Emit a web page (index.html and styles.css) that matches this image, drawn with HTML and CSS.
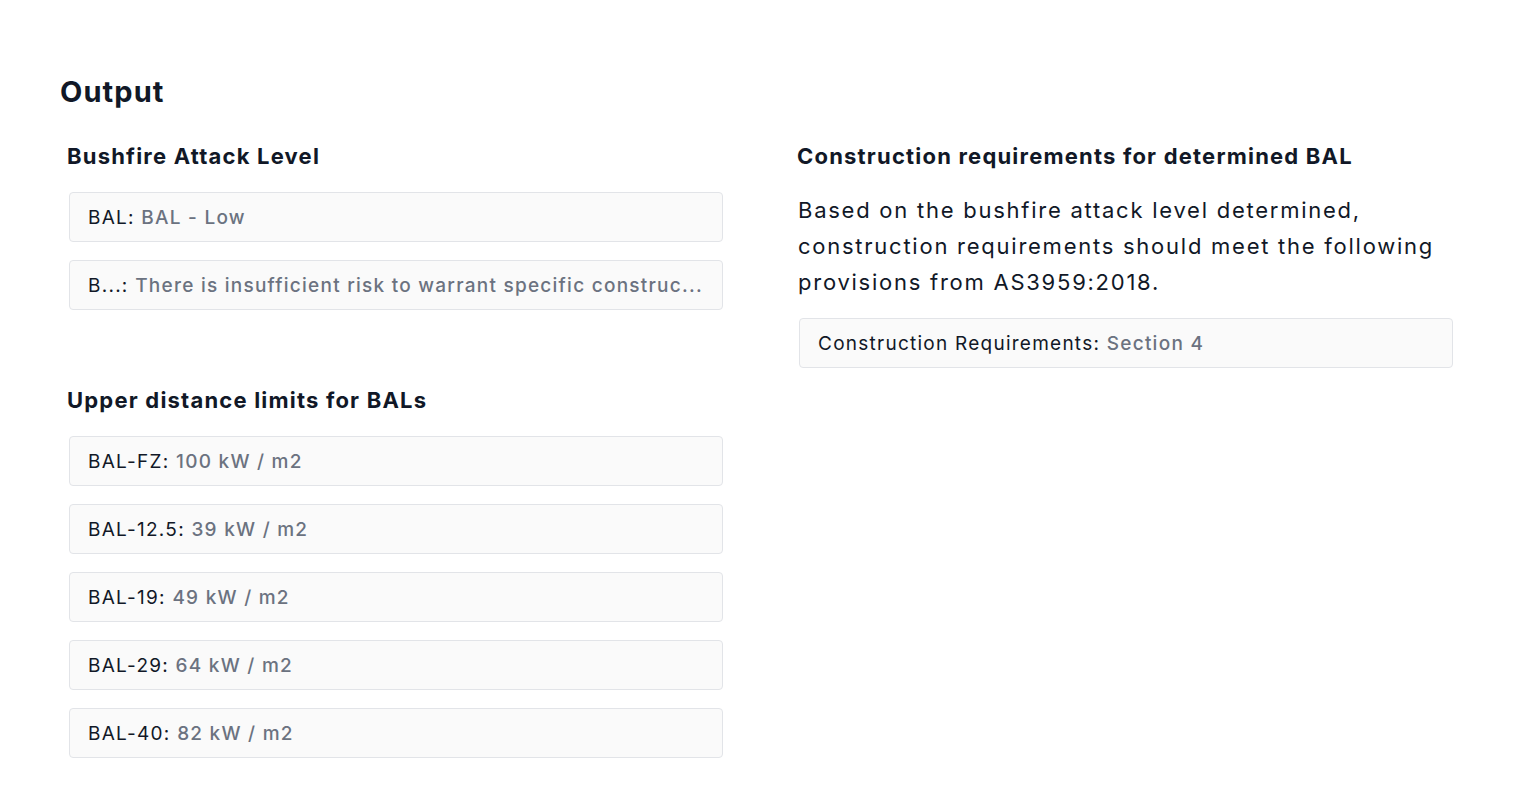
FILE: index.html
```html
<!DOCTYPE html>
<html>
<head>
<meta charset="utf-8">
<link rel="stylesheet" href="styles.css">
</head>
<body>
<main class="page">
  <h1 class="title">Output</h1>
  <div class="cols">
    <section class="col">
      <h2 class="heading">Bushfire Attack Level</h2>
      <div class="list">
        <div class="field"><span class="label">BAL:</span> <span class="value">BAL - Low</span></div>
        <div class="field"><span class="label">B...:</span> <span class="value">There is insufficient risk to warrant specific construc...</span></div>
      </div>
      <h2 class="heading heading-second">Upper distance limits for BALs</h2>
      <div class="list">
        <div class="field"><span class="label">BAL-FZ:</span> <span class="value">100 kW / m2</span></div>
        <div class="field"><span class="label">BAL-12.5:</span> <span class="value">39 kW / m2</span></div>
        <div class="field"><span class="label">BAL-19:</span> <span class="value">49 kW / m2</span></div>
        <div class="field"><span class="label">BAL-29:</span> <span class="value">64 kW / m2</span></div>
        <div class="field"><span class="label">BAL-40:</span> <span class="value">82 kW / m2</span></div>
      </div>
    </section>
    <section class="col">
      <h2 class="heading">Construction requirements for determined BAL</h2>
      <p class="desc">Based on the bushfire attack level determined, construction requirements should meet the following provisions from AS3959:2018.</p>
      <div class="list">
        <div class="field"><span class="label">Construction Requirements:</span> <span class="value">Section 4</span></div>
      </div>
    </section>
  </div>
</main>
</body>
</html>
```
FILE: styles.css
```css
* { box-sizing: border-box; }
html, body { margin: 0; padding: 0; background: #ffffff; }
body {
  font-family: Inter, "Noto Sans", sans-serif;
  color: #111827;
}
.page {
  padding: 74px 60px 0 60px;
}
.title {
  margin: 0;
  font-size: 29px;
  line-height: 36px;
  font-weight: 700;
  letter-spacing: 1.1px;
  color: #111827;
}
.cols {
  display: grid;
  grid-template-columns: 654px 654px;
  column-gap: 76px;
  margin-top: 30px;
  padding-left: 9px;
}
.heading {
  margin: 0 0 0 -2px;
  font-size: 22px;
  line-height: 32px;
  font-weight: 700;
  letter-spacing: 1.2px;
  color: #111827;
}
.heading-second {
  margin-top: 74px;
}
.list {
  display: flex;
  flex-direction: column;
  gap: 18px;
  margin-top: 20px;
}
.field {
  height: 50px;
  border: 1px solid #e2e4e8;
  border-radius: 4px;
  background: #fafafa;
  padding: 1px 18px 0 18px;
  line-height: 47px;
  font-size: 19px;
  letter-spacing: 1.25px;
  white-space: nowrap;
  overflow: hidden;
}
.label { color: #111827; }
.value { color: #6b7280; font-weight: 500; }
.desc {
  margin: 20px 0 0 -1px;
  font-size: 22px;
  line-height: 36px;
  color: #111827;
  letter-spacing: 1.75px;
}
.col .desc + .list { margin-top: 18px; }
```
